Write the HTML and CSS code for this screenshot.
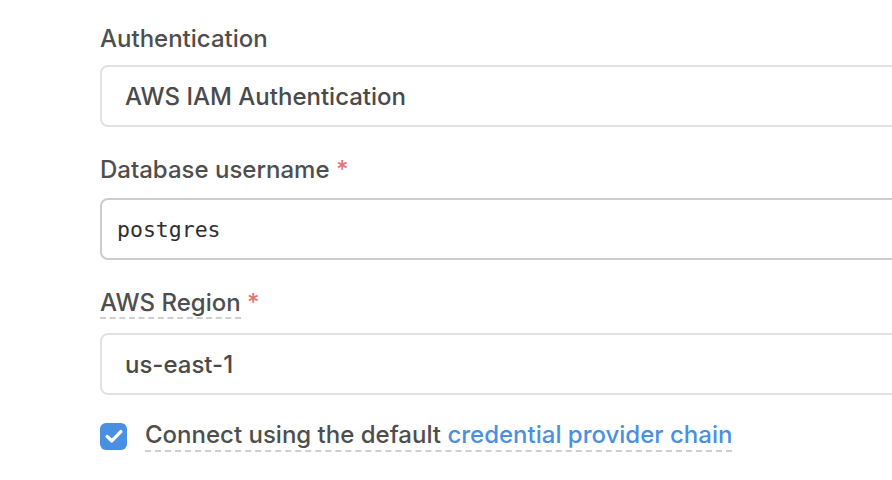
FILE: index.html
```html
<!DOCTYPE html>
<html>
<head>
<meta charset="utf-8">
<link rel="stylesheet" href="styles.css">
</head>
<body>
<div class="form">
  <div class="field field-first">
    <label class="label">Authentication</label>
    <div class="input">AWS IAM Authentication</div>
  </div>
  <div class="field">
    <label class="label">Database username <span class="req">*</span></label>
    <div class="input input-focus mono">postgres</div>
  </div>
  <div class="field">
    <label class="label label-tip"><span class="dashed">AWS Region</span> <span class="req">*</span></label>
    <div class="input">us-east-1</div>
  </div>
  <div class="check-row">
    <span class="checkbox">
      <svg viewBox="0 0 16 16"><path d="M3 8.3 L6.4 11.6 L13 4.8" fill="none" stroke="#fff" stroke-width="2.4" stroke-linecap="round" stroke-linejoin="round"/></svg>
    </span>
    <span class="check-text">Connect using the default <span class="link">credential provider chain</span></span>
  </div>
</div>
</body>
</html>
```

FILE: styles.css
```css
html, body {
  margin: 0;
  padding: 0;
  background: #ffffff;
  overflow: hidden;
}
body {
  font-family: Inter, "Noto Sans", sans-serif;
  color: #4c4c4c;
  width: 892px;
  height: 480px;
}
.form {
  padding: 24px 0 0 100px;
  display: flex;
  flex-direction: column;
}
.field {
  display: flex;
  flex-direction: column;
  margin-bottom: 28px;
}
.label {
  font-size: 24px;
  line-height: 30px;
  font-weight: 500;
  color: #4e4e4e;
  margin-bottom: 13px;
}
.field-first .label {
  margin-bottom: 11px;
}
.label-tip {
  margin-bottom: 15px;
}
.req {
  color: #e57373;
}
.dashed {
  border-bottom: 2px dashed #cfcfcf;
}
.input {
  box-sizing: border-box;
  width: 900px;
  height: 62px;
  border: 2px solid #e2e2e2;
  border-radius: 8px;
  padding: 0 0 0 23px;
  display: flex;
  align-items: center;
  font-size: 24px;
  font-weight: 500;
  color: #4a4a4a;
}
.input-focus {
  border-color: #cdcdcd;
}
.mono {
  font-family: "DejaVu Sans Mono", "Liberation Mono", monospace;
  font-weight: 400;
  font-size: 21.5px;
  padding-left: 15px;
  color: #2e2e2e;
}
.check-row {
  display: flex;
  align-items: center;
  gap: 18px;
  margin-top: -3px;
}
.checkbox {
  width: 27px;
  height: 27px;
  border-radius: 6px;
  background: #4a90e2;
  display: flex;
  align-items: center;
  justify-content: center;
}
.checkbox svg {
  width: 22px;
  height: 22px;
}
.check-text {
  font-size: 24px;
  line-height: 30px;
  font-weight: 500;
  color: #4e4e4e;
  border-bottom: 2px dashed #cfcfcf;
}
.link {
  color: #4a90e2;
}
```
